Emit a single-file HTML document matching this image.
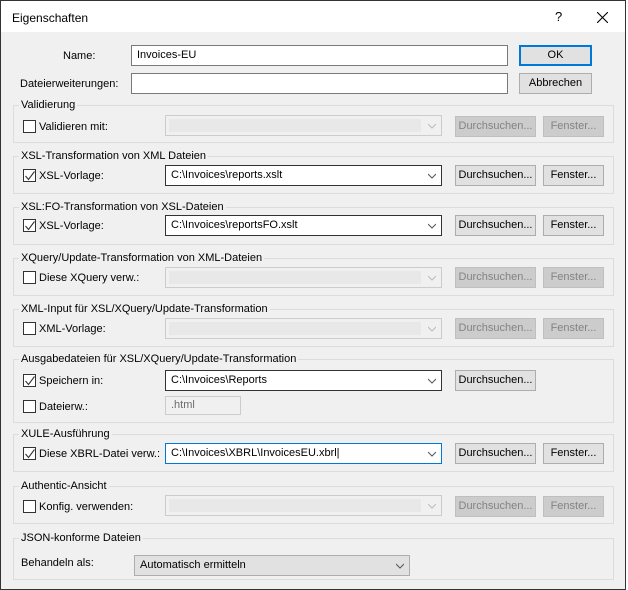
<!DOCTYPE html>
<html><head><meta charset="utf-8"><style>
*{box-sizing:border-box;margin:0;padding:0}
body{width:628px;height:590px;background:#fff;font-family:"Liberation Sans",sans-serif;font-size:11px;color:#000;position:relative;overflow:hidden}
.win{position:absolute;left:0;top:0;width:626px;height:590px;border:1px solid #333;background:#f0f0f0}
.title{position:absolute;left:0;top:0;width:624px;height:31px;background:#fff}
.a{position:absolute;white-space:nowrap;line-height:14px}
.grp{position:absolute;left:12px;width:601px;border:1px solid #dcdcdc}
.lg{position:absolute;background:#f0f0f0;padding:0 2px;left:18px}
.inp{position:absolute;background:#fff;border:1px solid #7a7a7a;height:21px;padding:2px 5px;line-height:15px}
.cb{position:absolute;background:#fff;border:1px solid #333;height:21px;padding:2px 5px;line-height:15px}
.cb.dis{background:#f0f0f0;border-color:#ccc}
.cb.dis::before{content:"";position:absolute;left:3px;top:3px;right:20px;bottom:3px;background:#e8e8e8}
.arr{position:absolute;right:5px;top:6px;width:8px;height:8px}
.btn{position:absolute;background:#e1e1e1;border:1px solid #adadad;height:21px;text-align:center;line-height:19px}
.btn.dis{background:#ccc;border-color:#bfbfbf;color:#838383}
.chk{position:absolute;width:13px;height:13px;border:1px solid #333;background:#fff}
</style></head><body>
<div class="win">
<div class="title"></div>
<div class="a" style="left:11px;top:10px;font-size:12px">Eigenschaften</div>
<div class="a" style="left:554px;top:9px;font-size:13px">?</div>
<svg class="a" style="left:596px;top:11px" width="11" height="11"><path d="M0 0L11 11M11 0L0 11" stroke="#000" stroke-width="1.1"/></svg>

<div class="a" style="left:62px;top:48px">Name:</div>
<div class="inp" style="left:130px;top:44px;width:377px">Invoices-EU</div>
<div class="a" style="left:19px;top:76px">Dateierweiterungen:</div>
<div class="inp" style="left:130px;top:72px;width:377px"></div>
<div class="btn" style="left:518px;top:44px;width:73px;border:2px solid #0078d7;line-height:17px">OK</div>
<div class="btn" style="left:518px;top:72px;width:73px">Abbrechen</div>

<div class="grp" style="top:104px;height:38px"></div><div class="lg a" style="top:97px">Validierung</div>
<div class="grp" style="top:155px;height:38px"></div><div class="lg a" style="top:148px">XSL-Transformation von XML Dateien</div>
<div class="grp" style="top:206px;height:38px"></div><div class="lg a" style="top:199px">XSL:FO-Transformation von XSL-Dateien</div>
<div class="grp" style="top:257px;height:38px"></div><div class="lg a" style="top:250px">XQuery/Update-Transformation von XML-Dateien</div>
<div class="grp" style="top:308px;height:38px"></div><div class="lg a" style="top:301px">XML-Input für XSL/XQuery/Update-Transformation</div>
<div class="grp" style="top:358px;height:64px"></div><div class="lg a" style="top:351px">Ausgabedateien für XSL/XQuery/Update-Transformation</div>
<div class="grp" style="top:433px;height:38px"></div><div class="lg a" style="top:426px">XULE-Ausführung</div>
<div class="grp" style="top:485px;height:38px"></div><div class="lg a" style="top:478px">Authentic-Ansicht</div>
<div class="grp" style="top:537px;height:42px"></div><div class="lg a" style="top:530px">JSON-konforme Dateien</div>

<div class="chk" style="left:22px;top:119px"></div><div class="a" style="left:38px;top:119px">Validieren mit:</div>
<div class="cb dis" style="left:164px;top:114px;width:277px"><svg class="arr" viewBox="0 0 8 8"><path d="M0 2L4 6L8 2" fill="none" stroke="#bbb"/></svg></div>
<div class="btn dis" style="left:454px;top:115px;width:81px">Durchsuchen...</div>
<div class="btn dis" style="left:542px;top:115px;width:61px">Fenster...</div>

<div class="chk" style="left:22px;top:168px"></div><svg class="a" style="left:24px;top:170px" width="10" height="10"><path d="M0.5 5L3.5 8.5L9.5 0.5" fill="none" stroke="#333" stroke-width="1.1"/></svg><div class="a" style="left:38px;top:168px">XSL-Vorlage:</div>
<div class="cb" style="left:164px;top:164px;width:277px">C:\Invoices\reports.xslt<svg class="arr" viewBox="0 0 8 8"><path d="M0 2L4 6L8 2" fill="none" stroke="#555"/></svg></div>
<div class="btn" style="left:454px;top:164px;width:81px">Durchsuchen...</div>
<div class="btn" style="left:542px;top:164px;width:61px">Fenster...</div>

<div class="chk" style="left:22px;top:218px"></div><svg class="a" style="left:24px;top:220px" width="10" height="10"><path d="M0.5 5L3.5 8.5L9.5 0.5" fill="none" stroke="#333" stroke-width="1.1"/></svg><div class="a" style="left:38px;top:218px">XSL-Vorlage:</div>
<div class="cb" style="left:164px;top:214px;width:277px">C:\Invoices\reportsFO.xslt<svg class="arr" viewBox="0 0 8 8"><path d="M0 2L4 6L8 2" fill="none" stroke="#555"/></svg></div>
<div class="btn" style="left:454px;top:214px;width:81px">Durchsuchen...</div>
<div class="btn" style="left:542px;top:214px;width:61px">Fenster...</div>

<div class="chk" style="left:22px;top:270px"></div><div class="a" style="left:38px;top:270px">Diese XQuery verw.:</div>
<div class="cb dis" style="left:164px;top:266px;width:277px"><svg class="arr" viewBox="0 0 8 8"><path d="M0 2L4 6L8 2" fill="none" stroke="#bbb"/></svg></div>
<div class="btn dis" style="left:454px;top:266px;width:81px">Durchsuchen...</div>
<div class="btn dis" style="left:542px;top:266px;width:61px">Fenster...</div>

<div class="chk" style="left:22px;top:321px"></div><div class="a" style="left:38px;top:321px">XML-Vorlage:</div>
<div class="cb dis" style="left:164px;top:317px;width:277px"><svg class="arr" viewBox="0 0 8 8"><path d="M0 2L4 6L8 2" fill="none" stroke="#bbb"/></svg></div>
<div class="btn dis" style="left:454px;top:317px;width:81px">Durchsuchen...</div>
<div class="btn dis" style="left:542px;top:317px;width:61px">Fenster...</div>

<div class="chk" style="left:22px;top:373px"></div><svg class="a" style="left:24px;top:375px" width="10" height="10"><path d="M0.5 5L3.5 8.5L9.5 0.5" fill="none" stroke="#333" stroke-width="1.1"/></svg><div class="a" style="left:38px;top:373px">Speichern in:</div>
<div class="cb" style="left:164px;top:369px;width:277px">C:\Invoices\Reports<svg class="arr" viewBox="0 0 8 8"><path d="M0 2L4 6L8 2" fill="none" stroke="#555"/></svg></div>
<div class="btn" style="left:454px;top:369px;width:81px">Durchsuchen...</div>
<div class="chk" style="left:22px;top:399px"></div><div class="a" style="left:38px;top:399px">Dateierw.:</div>
<div class="inp" style="left:164px;top:395px;width:76px;height:19px;background:#f0f0f0;border-color:#ccc;color:#6d6d6d;line-height:13px">.html</div>

<div class="chk" style="left:22px;top:446px"></div><svg class="a" style="left:24px;top:448px" width="10" height="10"><path d="M0.5 5L3.5 8.5L9.5 0.5" fill="none" stroke="#333" stroke-width="1.1"/></svg><div class="a" style="left:38px;top:446px">Diese XBRL-Datei verw.:</div>
<div class="cb" style="left:164px;top:442px;width:277px;border-color:#0078d7">C:\Invoices\XBRL\InvoicesEU.xbrl|<svg class="arr" viewBox="0 0 8 8"><path d="M0 2L4 6L8 2" fill="none" stroke="#555"/></svg></div>
<div class="btn" style="left:454px;top:442px;width:81px">Durchsuchen...</div>
<div class="btn" style="left:542px;top:442px;width:61px">Fenster...</div>

<div class="chk" style="left:22px;top:499px"></div><div class="a" style="left:38px;top:499px">Konfig. verwenden:</div>
<div class="cb dis" style="left:164px;top:494px;width:277px"><svg class="arr" viewBox="0 0 8 8"><path d="M0 2L4 6L8 2" fill="none" stroke="#bbb"/></svg></div>
<div class="btn dis" style="left:454px;top:495px;width:81px">Durchsuchen...</div>
<div class="btn dis" style="left:542px;top:495px;width:61px">Fenster...</div>

<div class="a" style="left:20px;top:555px">Behandeln als:</div>
<div class="cb" style="left:133px;top:554px;width:276px;background:#e1e1e1;border-color:#adadad">Automatisch ermitteln<svg class="arr" viewBox="0 0 8 8"><path d="M0 2L4 6L8 2" fill="none" stroke="#555"/></svg></div>
</div>
</body></html>
